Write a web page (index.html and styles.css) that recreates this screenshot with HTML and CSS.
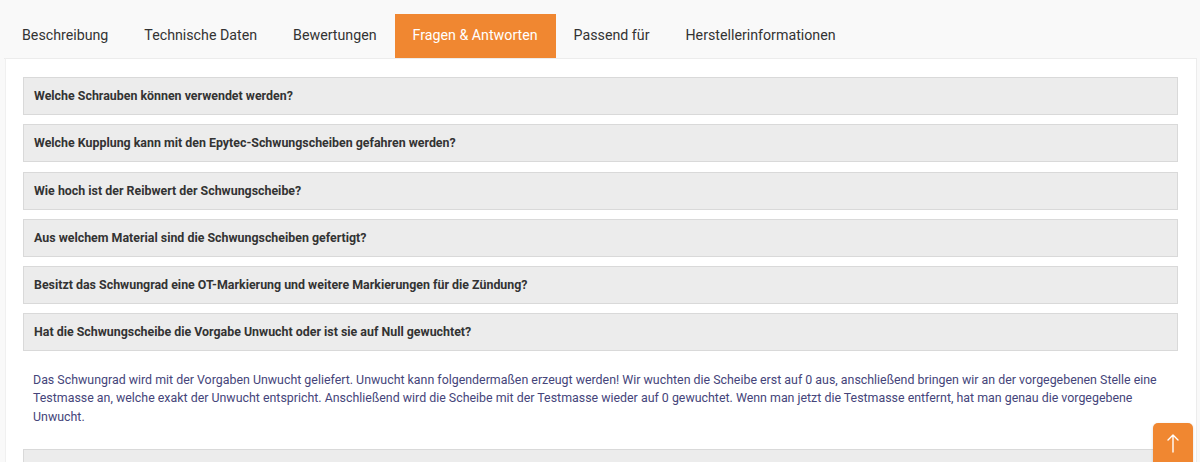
FILE: index.html
```html
<!DOCTYPE html>
<html lang="de">
<head>
<meta charset="utf-8">
<title>Fragen &amp; Antworten</title>
<link rel="stylesheet" href="styles.css">
</head>
<body>
<div class="page">
  <nav class="tabs">
    <a class="tab">Beschreibung</a>
    <a class="tab">Technische Daten</a>
    <a class="tab">Bewertungen</a>
    <a class="tab active">Fragen &amp; Antworten</a>
    <a class="tab">Passend für</a>
    <a class="tab">Herstellerinformationen</a>
  </nav>
  <section class="panel">
    <div class="faq">
      <div class="q">Welche Schrauben können verwendet werden?</div>
      <div class="q">Welche Kupplung kann mit den Epytec-Schwungscheiben gefahren werden?</div>
      <div class="q">Wie hoch ist der Reibwert der Schwungscheibe?</div>
      <div class="q">Aus welchem Material sind die Schwungscheiben gefertigt?</div>
      <div class="q">Besitzt das Schwungrad eine OT-Markierung und weitere Markierungen für die Zündung?</div>
      <div class="q">Hat die Schwungscheibe die Vorgabe Unwucht oder ist sie auf Null gewuchtet?</div>
      <div class="answer">Das Schwungrad wird mit der Vorgaben Unwucht geliefert. Unwucht kann folgendermaßen erzeugt werden! Wir wuchten die Scheibe erst auf 0 aus, anschließend bringen wir an der vorgegebenen Stelle eine Testmasse an, welche exakt der Unwucht entspricht. Anschließend wird die Scheibe mit der Testmasse wieder auf 0 gewuchtet. Wenn man jetzt die Testmasse entfernt, hat man genau die vorgegebene Unwucht.</div>
      <div class="q"></div>
    </div>
  </section>
  <button class="totop" aria-label="Nach oben">
    <svg width="12" height="20" viewBox="0 0 12 20"><path d="M6 19V2M1 7l5-5 5 5" fill="none" stroke="#fff" stroke-width="1.4" stroke-linecap="round" stroke-linejoin="round"/></svg>
  </button>
</div>
</body>
</html>
```
FILE: styles.css
```css
html, body {
  margin: 0;
  padding: 0;
  background: #f9f9f9;
  font-family: Roboto, "Liberation Sans", Arial, sans-serif;
  overflow: hidden;
}
.page {
  position: relative;
  height: 462px;
  padding-top: 14px;
  box-sizing: border-box;
  overflow: hidden;
}
.tabs {
  display: flex;
  margin-left: 4px;
  width: 851px;
  border-bottom: 1px solid #ebebeb;
}
.tab {
  display: block;
  flex-shrink: 0;
  white-space: nowrap;
  padding: 0 18px;
  height: 44px;
  line-height: 43px;
  font-size: 14.22px;
  color: #333;
}
.tab.active {
  background: #f08731;
  color: #fff;
}
.panel {
  box-sizing: border-box;
  margin-left: 5px;
  width: 1192px;
  background: #fff;
  border-right: 1px solid #ececec;
  border-left: 1px solid #f0f0f0;
  border-top: 1px solid #ececec;
  margin-top: -1px;
  padding: 18px 18px 0 17px;
  height: 404px;
}
.faq {
  display: flex;
  flex-direction: column;
  gap: 9.25px;
}
.q {
  height: 36px;
  line-height: 36px;
  background: #ececec;
  border: 1px solid #d9d9d9;
  padding-left: 10px;
  font-size: 12.4px;
  font-weight: 700;
  color: #333;
}
.answer {
  padding: 10px 10px 13.5px 10px;
  font-size: 12.4px;
  line-height: 18.5px;
  color: #45457a;
}
.totop {
  position: absolute;
  left: 1153px;
  top: 423px;
  width: 40px;
  height: 44px;
  border: none;
  border-radius: 5px;
  background: #f08731;
  display: flex;
  align-items: center;
  justify-content: center;
  padding: 0 0 4px 0;
  box-shadow: 0 1px 3px rgba(0,0,0,0.15);
}
```
